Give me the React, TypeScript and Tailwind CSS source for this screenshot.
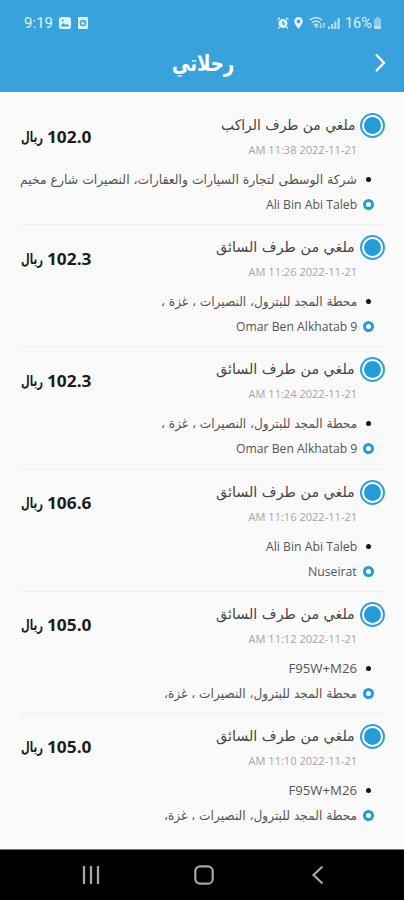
import { useLayoutEffect, useRef, useState } from "react";

type FitProps = { text: string; width: number; className?: string; dir?: "rtl" | "ltr" };

/* One line of text condensed or expanded horizontally to an exact width. */
function Fit({ text, width, className = "", dir = "rtl" }: FitProps) {
  const ref = useRef<HTMLSpanElement>(null);
  const [scale, setScale] = useState(1);
  useLayoutEffect(() => {
    if (ref.current) setScale(width / ref.current.offsetWidth);
  }, [width, text]);
  return (
    <div dir="rtl" className="flex shrink-0 items-center" style={{ width }}>
      <span
        ref={ref}
        dir={dir}
        className={"block shrink-0 origin-right whitespace-nowrap " + className}
        style={{ transform: `scaleX(${scale})` }}
      >
        {text}
      </span>
    </div>
  );
}

const arabic = "font-['DejaVu_Sans',sans-serif]";
const latin = "font-['Open_Sans','Noto_Sans',sans-serif]";

type Stop = { text: string; width: number; ltr?: boolean };
type Trip = { status: string; statusWidth: number; time: string; price: string; from: Stop; to: Stop };

const driver = "ملغي من طرف السائق";
const station: Stop = { text: "محطة المجد للبترول، النصيرات ، غزة ،", width: 196 };
const stationEnd: Stop = { text: "محطة المجد للبترول، النصيرات ، غزة،", width: 193 };
const omar: Stop = { text: "Omar Ben Alkhatab 9", width: 121, ltr: true };
const ali: Stop = { text: "Ali Bin Abi Taleb", width: 91, ltr: true };
const code: Stop = { text: "F95W+M26", width: 68.5, ltr: true };

const trips: Trip[] = [
  {
    status: "ملغي من طرف الراكب",
    statusWidth: 134,
    time: "11:38",
    price: "102.0",
    from: { text: "شركة الوسطى لتجارة السيارات والعقارات، النصيرات شارع مخيم", width: 337 },
    to: ali,
  },
  { status: driver, statusWidth: 139, time: "11:26", price: "102.3", from: station, to: omar },
  { status: driver, statusWidth: 139, time: "11:24", price: "102.3", from: station, to: omar },
  { status: driver, statusWidth: 139, time: "11:16", price: "106.6", from: ali, to: { text: "Nuseirat", width: 49, ltr: true } },
  { status: driver, statusWidth: 139, time: "11:12", price: "105.0", from: code, to: stationEnd },
  { status: driver, statusWidth: 139, time: "11:10", price: "105.0", from: code, to: stationEnd },
];

function StopLine({ stop, end }: { stop: Stop; end?: boolean }) {
  return (
    <div className="flex h-[25px] items-center">
      <span className="flex w-[23px] shrink-0 justify-center">
        {end ? (
          <span className="size-[11px] rounded-full border-[3px] border-[#259bd4] bg-white" />
        ) : (
          <span className="size-[5px] rounded-full bg-[#141414]" />
        )}
      </span>
      <Fit
        text={stop.text}
        width={stop.width}
        dir={stop.ltr ? "ltr" : "rtl"}
        className={(stop.ltr ? `text-[12.5px] ${latin}` : `text-[13px] ${arabic}`) + " leading-[25px] text-[#555]"}
      />
    </div>
  );
}

function TripRow({ trip, last }: { trip: Trip; last: boolean }) {
  return (
    <div className={"mx-5 h-[122.2px] border-b pt-[9px] " + (last ? "border-transparent" : "border-[#f1f1f1]")}>
      <div className="-mr-1 flex justify-between">
        <div className="flex pr-[3px]">
          <span className="mt-[1px] flex size-[25px] items-center justify-center rounded-full border-[2.5px] border-[#349fd8] bg-white">
            <span className="size-[17px] rounded-full bg-[#259bd7]" />
          </span>
          <div className="mr-[1px]">
            <Fit text={trip.status} width={trip.statusWidth} className={`mr-1 h-[26px] text-[14.5px] leading-[27px] text-[#454545] ${arabic}`} />
            <div className="mr-[2px] mt-[2px] h-[20px]">
              <Fit text={`AM ${trip.time} 2022-11-21`} width={108.5} dir="ltr" className={`text-[10.5px] leading-[20px] text-[#a5a5a5] ${latin}`} />
            </div>
          </div>
        </div>
        <div className="flex h-[49px] items-center gap-1 pl-[1px]">
          <Fit text={trip.price} width={44} dir="ltr" className={`text-[16.5px] font-bold leading-[26px] text-[#1c1c1c] ${latin}`} />
          <Fit text="ريال" width={22} className={`text-[15px] font-bold leading-[26px] text-[#1c1c1c] ${arabic}`} />
        </div>
      </div>
      <div className="mr-1 pt-[6px]">
        <StopLine stop={trip.from} />
        <StopLine stop={trip.to} end />
      </div>
    </div>
  );
}

function StatusBar() {
  return (
    <div dir="ltr" className="flex h-[45px] items-center justify-between pl-[24px] pr-[22px] text-[#dcf6ff]">
      <div className="flex items-center">
        <Fit text="9:19" width={29} dir="ltr" className="font-[Roboto,sans-serif] text-[15px] leading-[20px]" />
        <svg className="ml-[6px]" width="12" height="12" viewBox="0 0 12 12">
          <rect width="12" height="12" rx="2.5" fill="currentColor" />
          <path d="M1.5 9.5 4.3 6l2 2.1L8 6.8l2.5 2.7z" fill="#39a2dc" />
          <circle cx="3.7" cy="3.5" r="1" fill="#39a2dc" />
        </svg>
        <svg className="ml-[7px]" width="10" height="12" viewBox="0 0 10 12">
          <rect width="10" height="12" rx="1" fill="currentColor" />
          <circle cx="5" cy="6" r="2.6" fill="none" stroke="#39a2dc" strokeWidth="1.5" />
          <path d="M5 6 7 4.8" stroke="#39a2dc" />
        </svg>
      </div>
      <div className="flex items-center">
        <svg width="12" height="12" viewBox="0 0 12 12">
          <circle cx="6" cy="6.5" r="4.5" fill="currentColor" />
          <path d="M.5 2.8 3 .7M11.5 2.8 9 .7M2.5 10 1.3 11.5M9.5 10l1.2 1.5" fill="none" stroke="currentColor" strokeWidth="1.5" />
          <path d="M6 4v3h2.2" fill="none" stroke="#39a2dc" strokeWidth="1.3" />
        </svg>
        <svg className="ml-[5px]" width="9" height="12" viewBox="0 0 9 12">
          <path fillRule="evenodd" d="M4.5 0a4.3 4.3 0 0 1 4.3 4.3C8.8 7.5 4.5 12 4.5 12S.2 7.5.2 4.3A4.3 4.3 0 0 1 4.5 0Zm0 2.6a1.8 1.8 0 1 0 0 3.6 1.8 1.8 0 0 0 0-3.6Z" fill="currentColor" />
        </svg>
        <svg className="ml-[6px] opacity-80" width="17" height="13" viewBox="0 0 17 13" fill="none" stroke="currentColor">
          <path d="M.8 4.2q6.2-5 12.4 0M3 6.7q4-3.2 8 0M5 9q2-1.6 4 0" strokeWidth="1.6" />
          <path d="m6 10 1.3 1.7L9 10z" fill="currentColor" />
          <path d="M11.8 7v5m-1.5-1.5 1.5 1.5 1.5-1.500M15 12V7m-1.300 1.400L15 7l1.300 1.400" strokeWidth="1" />
        </svg>
        <svg className="ml-[2px] opacity-80" width="12" height="12" viewBox="0 0 12 12" fill="currentColor">
          <path d="M0 9.5h2V12H0zM3.2 7h2v5h-2zM6.4 4.500h2V12h-2z" />
          <path d="M9.6 1h2v11h-2z" />
        </svg>
        <div className="ml-[5px]">
          <Fit text="16%" width={27} dir="ltr" className="font-[Roboto,sans-serif] text-[15px] leading-[20px]" />
        </div>
        <svg className="ml-[1px] opacity-75" width="9" height="12" viewBox="0 0 9 12">
          <path d="M3 0h3v1.5h2V12H1V1.500h2z" fill="currentColor" opacity=".65" />
          <path d="M1 8.500h7V12H1z" fill="currentColor" />
        </svg>
      </div>
    </div>
  );
}

export default function App() {
  return (
    <div dir="rtl" className="flex h-[900px] w-[404px] flex-col overflow-hidden bg-[#fafafa]">
      <header className="h-[92px] shrink-0 bg-[#39a2dc]">
        <StatusBar />
        <div className="grid h-[36px] grid-cols-[60px_1fr_62px] items-center">
          <svg className="mr-[17px]" width="14" height="20" viewBox="0 0 14 20" fill="none" stroke="white" strokeWidth="2.3">
            <path d="m3 1.500 8 8.300-8 8.300" />
          </svg>
          <div className="flex justify-center">
            <Fit text="رحلاتي" width={62} className={`text-[23px] font-bold leading-[36px] text-white ${arabic}`} />
          </div>
        </div>
      </header>
      <main className="h-[757px] shrink-0 overflow-hidden pt-[11px]">
        {trips.map((trip, i) => (
          <TripRow key={trip.time} trip={trip} last={i === trips.length - 1} />
        ))}
      </main>
      <nav dir="ltr" className="flex h-[51px] shrink-0 items-center border-t border-[#777] bg-black pl-[81px]">
        <svg width="20" height="20" viewBox="0 0 20 20" stroke="#a6a6a6" strokeWidth="2.3">
          <path d="M3 1v18M10 1v18M17 1v18" />
        </svg>
        <svg className="ml-[93px]" width="20" height="20" viewBox="0 0 20 20" fill="none" stroke="#a6a6a6" strokeWidth="2.2">
          <rect x="1.3" y="1.3" width="17.4" height="17.4" rx="4.8" />
        </svg>
        <svg className="ml-[97px]" width="13" height="20" viewBox="0 0 13 20" fill="none" stroke="#a6a6a6" strokeWidth="2.2">
          <path d="m11.500 1.500-9 8.500 9 8.500" />
        </svg>
      </nav>
    </div>
  );
}
